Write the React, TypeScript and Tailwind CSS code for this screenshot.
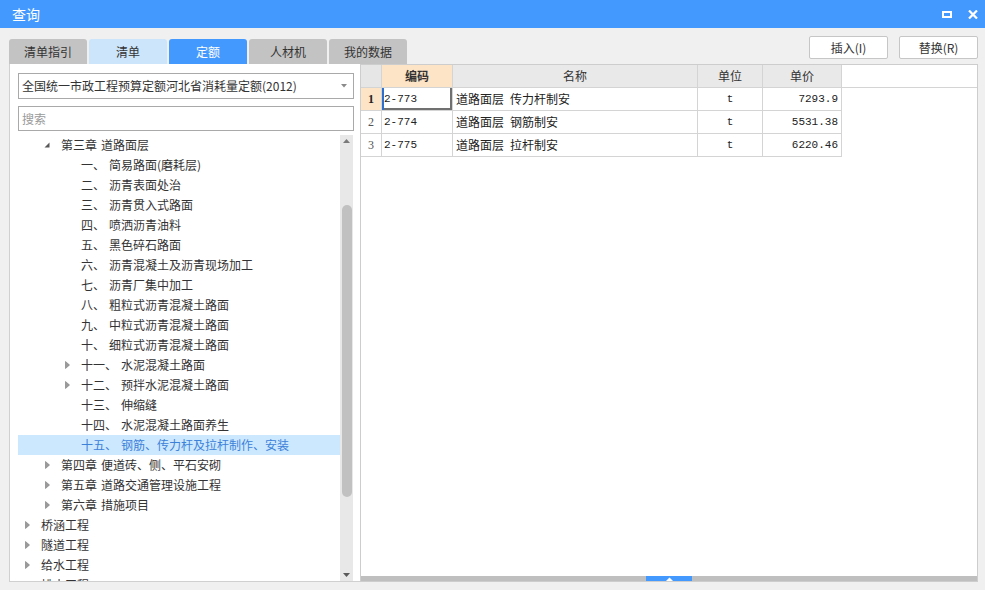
import React from "react"

type Node = {
    level: number
    num?: string
    label: string
    arrow?: "open" | "closed"
    selected?: boolean
}

const tree: Node[] = [
    { level: 1, num: "第三章", label: "道路面层", arrow: "open" },
    { level: 2, num: "一、", label: "简易路面(磨耗层)" },
    { level: 2, num: "二、", label: "沥青表面处治" },
    { level: 2, num: "三、", label: "沥青贯入式路面" },
    { level: 2, num: "四、", label: "喷洒沥青油料" },
    { level: 2, num: "五、", label: "黑色碎石路面" },
    { level: 2, num: "六、", label: "沥青混凝土及沥青现场加工" },
    { level: 2, num: "七、", label: "沥青厂集中加工" },
    { level: 2, num: "八、", label: "粗粒式沥青混凝土路面" },
    { level: 2, num: "九、", label: "中粒式沥青混凝土路面" },
    { level: 2, num: "十、", label: "细粒式沥青混凝土路面" },
    { level: 2, num: "十一、", label: "水泥混凝土路面", arrow: "closed" },
    { level: 2, num: "十二、", label: "预拌水泥混凝土路面", arrow: "closed" },
    { level: 2, num: "十三、", label: "伸缩缝" },
    { level: 2, num: "十四、", label: "水泥混凝土路面养生" },
    { level: 2, num: "十五、", label: "钢筋、传力杆及拉杆制作、安装", selected: true },
    { level: 1, num: "第四章", label: "便道砖、侧、平石安砌", arrow: "closed" },
    { level: 1, num: "第五章", label: "道路交通管理设施工程", arrow: "closed" },
    { level: 1, num: "第六章", label: "措施项目", arrow: "closed" },
    { level: 0, label: "桥涵工程", arrow: "closed" },
    { level: 0, label: "隧道工程", arrow: "closed" },
    { level: 0, label: "给水工程", arrow: "closed" },
    { level: 0, label: "排水工程", arrow: "closed" },
]

const indent = ["pl-0", "pl-[20px]", "pl-[40px]"]

const tabs = [
    { name: "清单指引", cls: "bg-[#c3c3c3] text-[#333]" },
    { name: "清单", cls: "bg-[#cce5fb] text-[#333]" },
    { name: "定额", cls: "bg-[#4499ff] text-white" },
    { name: "人材机", cls: "bg-[#c3c3c3] text-[#333]" },
    { name: "我的数据", cls: "bg-[#c3c3c3] text-[#333]" },
]

const rows = [
    { no: "1", code: "2-773", part: "道路面层", name: "传力杆制安", unit: "t", price: "7293.9" },
    { no: "2", code: "2-774", part: "道路面层", name: "钢筋制安", unit: "t", price: "5531.38" },
    { no: "3", code: "2-775", part: "道路面层", name: "拉杆制安", unit: "t", price: "6220.46" },
]

const mono = "font-['Liberation_Mono','Noto_Sans_CJK_SC',monospace] text-[11px]"

const Arrow = ({ kind }: { kind?: "open" | "closed" }) => {
    if (kind === "open")
        return (
            <svg width="6" height="6" viewBox="0 0 6 6" className="ml-[6px]">
                <polygon points="5.5,0.5 5.5,5.5 0.5,5.5" fill="#595959" />
            </svg>
        )
    if (kind === "closed")
        return (
            <svg width="5" height="8" viewBox="0 0 5 8" className="ml-[7px]">
                <polygon points="0.5,0.5 4.5,4 0.5,7.5" fill="#9a9a9a" stroke="#7a7a7a" strokeWidth="0.6" />
            </svg>
        )
    return null
}

export default function App() {
    return (
        <div className="w-[985px] h-[590px] bg-[#f0f0f0] flex flex-col overflow-hidden font-['Noto_Sans_CJK_SC',sans-serif] text-[12px] text-[#333]">
            {/* title bar */}
            <div className="h-[28px] shrink-0 bg-[#4499ff] flex items-center pl-[12px] pr-[7px] text-white">
                <span className="text-[14px] leading-none">查询</span>
                <div className="ml-auto flex items-center gap-[16px]">
                    <div className="w-[10px] h-[7px] border-2 border-white" />
                    <svg width="10" height="9" viewBox="0 0 10 9">
                        <path d="M1 0.5 9 8.5M9 0.5 1 8.5" stroke="white" strokeWidth="2.2" />
                    </svg>
                </div>
            </div>

            {/* tabs + buttons */}
            <div className="h-[36px] shrink-0 flex pl-[9px] pr-[7px]">
                <div className="flex gap-[2px] pt-[11px]">
                    {tabs.map(t => (
                        <div key={t.name} className={`w-[78px] h-[25px] rounded-t-[3px] flex items-center justify-center leading-none ${t.cls}`}>
                            {t.name}
                        </div>
                    ))}
                </div>
                <div className="ml-auto flex gap-[11px] pt-[8px]">
                    <button className="w-[79px] h-[23px] bg-white border border-[#c6c6c6] rounded-[2px] leading-none text-[#333]">插入(I)</button>
                    <button className="w-[79px] h-[23px] bg-white border border-[#c6c6c6] rounded-[2px] leading-none text-[#333]">替换(R)</button>
                </div>
            </div>

            {/* panels */}
            <div className="h-[518px] shrink-0 flex pl-[9px] pr-[7px]">
                {/* left panel */}
                <div className="w-[351px] bg-white border-l border-b border-[#d0d0d0] flex flex-col pt-[9px] pl-[8px] pr-[6px]">
                    <div className="h-[26px] border border-[#a9a9a9] flex items-center pl-[3px] pr-[6px]">
                        <span className="leading-none">全国统一市政工程预算定额河北省消耗量定额(2012)</span>
                        <svg width="6" height="4" viewBox="0 0 6 4" className="ml-auto">
                            <polygon points="0,0 6,0 3,3.5" fill="#8a8a8a" />
                        </svg>
                    </div>
                    <div className="h-[25px] mt-[7px] border border-[#a9a9a9] flex items-center pl-[3px] text-[#9a9a9a]">
                        <span className="leading-none">搜索</span>
                    </div>
                    <div className="mt-[4px] flex-1 flex min-h-0">
                        <div className="w-[322px] overflow-hidden">
                            {tree.map((n, i) => (
                                <div key={i} className={`h-[20px] flex items-center ${indent[n.level]} ${n.selected ? "bg-[#cce8ff] text-[#3c82d8]" : ""}`}>
                                    <div className="w-[23px] shrink-0 flex items-center">
                                        <Arrow kind={n.arrow} />
                                    </div>
                                    <span className="leading-none whitespace-nowrap">{n.num}</span>
                                    {n.num ? <span className="ml-[4px] leading-none whitespace-nowrap">{n.label}</span> : <span className="leading-none whitespace-nowrap">{n.label}</span>}
                                </div>
                            ))}
                        </div>
                        <div className="w-[13px] bg-[#e8e8e8] flex flex-col items-center">
                            <svg width="7" height="4" viewBox="0 0 7 4" className="mt-[4px]">
                                <polygon points="0,4 7,4 3.5,0" fill="#7a7a7a" />
                            </svg>
                            <div className="h-[62px]" />
                            <div className="w-[10px] h-[292px] rounded-full bg-[#c1c1c1]" />
                            <div className="flex-1" />
                            <svg width="7" height="4" viewBox="0 0 7 4" className="mb-[4px]">
                                <polygon points="0,0 7,0 3.5,4" fill="#5a5a5a" />
                            </svg>
                        </div>
                    </div>
                </div>

                {/* right panel */}
                <div className="w-[618px] bg-white border border-[#cdcdcd] flex flex-col">
                    <div className="flex h-[23px] border-b border-[#d4d4d4]">
                        <div className="w-[21px] bg-[#e6e6e6] border-r border-[#d4d4d4]" />
                        <div className="w-[71px] bg-[#fde4c6] border-r border-[#d4d4d4] flex items-center justify-center font-bold leading-none">编码</div>
                        <div className="w-[245px] bg-[#e9e9e9] border-r border-[#d4d4d4] flex items-center justify-center leading-none">名称</div>
                        <div className="w-[65px] bg-[#e9e9e9] border-r border-[#d4d4d4] flex items-center justify-center leading-none">单位</div>
                        <div className="w-[79px] bg-[#e9e9e9] border-r border-[#d4d4d4] flex items-center justify-center leading-none">单价</div>
                    </div>
                    {rows.map((r, i) => (
                        <div key={r.no} className="flex h-[23px]">
                            <div className={`w-[21px] border-r border-b border-[#d4d4d4] flex items-center justify-center font-['Liberation_Serif',serif] text-[12px] ${i === 0 ? "bg-[#fde4c6] font-bold text-[#222]" : "text-[#555]"}`}>{r.no}</div>
                            <div className={`w-[71px] border-r border-b border-[#d4d4d4] flex items-center pl-[2px] ${mono} text-[#222] ${i === 0 ? "shadow-[inset_2px_0_0_#2d6fd0,inset_-2px_-2px_0_#707070]" : ""}`}>{r.code}</div>
                            <div className="w-[245px] border-r border-b border-[#d4d4d4] flex items-center pl-[3px] leading-none text-[#222]">
                                <span>{r.part}</span>
                                <span className="ml-[6px]">{r.name}</span>
                            </div>
                            <div className={`w-[65px] border-r border-b border-[#d4d4d4] flex items-center justify-center ${mono} text-[#222]`}>{r.unit}</div>
                            <div className={`w-[79px] border-r border-b border-[#d4d4d4] flex items-center justify-end pr-[3px] ${mono} text-[#222]`}>{r.price}</div>
                        </div>
                    ))}
                    <div className="flex-1" />
                    <div className="h-[5px] bg-[#bfbfbf] flex justify-center">
                        <div className="w-[46px] h-[5px] bg-[#4499ff] flex items-center justify-center">
                            <svg width="7" height="4" viewBox="0 0 7 4">
                                <polygon points="0,4 7,4 3.5,0.5" fill="white" />
                            </svg>
                        </div>
                    </div>
                </div>
            </div>
        </div>
    )
}
